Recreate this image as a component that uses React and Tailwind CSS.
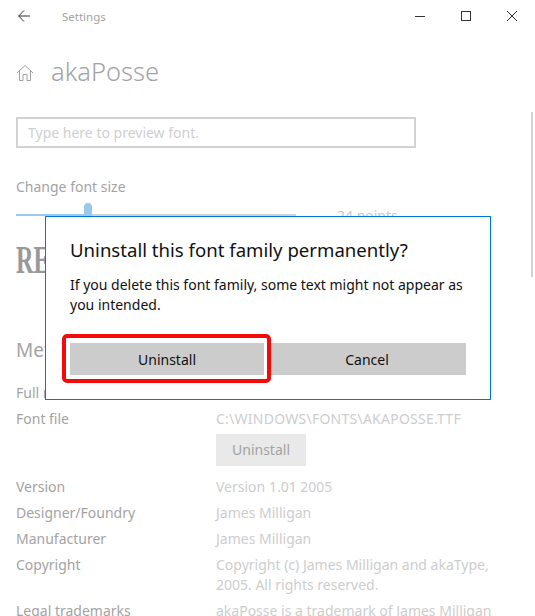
import React from 'react';

const rows = [
  { label: 'Version', value: 'Version 1.01 2005' },
  { label: 'Designer/Foundry', value: 'James Milligan' },
  { label: 'Manufacturer', value: 'James Milligan' },
  { label: 'Copyright', value: 'Copyright (c) James Milligan and akaType, 2005. All rights reserved.' },
  { label: 'Legal trademarks', value: 'akaPosse is a trademark of James Milligan' },
];

const TitleBar = () => (
  <div className="flex h-8 items-center text-[#333]">
    <svg className="ml-[18px] h-3 w-3" viewBox="0 0 12 12" fill="none" stroke="currentColor" strokeWidth="1">
      <path d="M0.5 6H12M6 0.5L0.7 6L6 11.5" />
    </svg>
    <span className="ml-[32px] mt-0.5 text-[11.5px] text-[#a3a3a3]">Settings</span>
    <div className="ml-auto flex">
      <div className="flex h-8 w-[46px] items-center justify-center">
        <div className="h-px w-2.5 bg-[#333]" />
      </div>
      <div className="flex h-8 w-[46px] items-center justify-center">
        <div className="h-2.5 w-2.5 border border-[#333]" />
      </div>
      <div className="flex h-8 w-[46px] items-center justify-center">
        <svg className="h-2.5 w-2.5" viewBox="0 0 10 10" fill="none" stroke="currentColor" strokeWidth="1">
          <path d="M0 0L10 10M10 0L0 10" />
        </svg>
      </div>
    </div>
  </div>
);

const App = () => {
  return (
    <div className="relative h-[616px] w-[535px] overflow-hidden bg-white font-['Noto_Sans',sans-serif] text-[14px]">
      <TitleBar />

      <div className="pl-4">
        <div className="mt-[21px] flex h-10 items-center">
          <svg className="h-[18px] w-[18px] text-[#a0a0a0]" viewBox="0 0 18 18" fill="none" stroke="currentColor" strokeWidth="1">
            <path d="M1 9L9 1.5L17 9M3.5 7V16.5H7V10.5H11V16.5H14.5V7" />
          </svg>
          <span className="ml-[17px] -mt-1 text-[25.5px] font-light text-[#a3a3a3]">akaPosse</span>
        </div>

        <div className="mt-[24px] flex h-[31px] w-[400px] items-center border-2 border-[#d2d2d2] pl-2.5 text-[14px] text-[#cfcfcf]">
          Type here to preview font.
        </div>

        <div className="mt-[28px] text-[#a3a3a3]">Change font size</div>

        <div className="mt-[9px] flex h-[18px] items-center">
          <div className="relative h-[2px] w-[280px] bg-[#d2d2d2]">
            <div className="h-full w-[72px] bg-[#99c9ef]" />
            <div className="absolute left-[68px] top-[-11px] h-[14px] w-2 rounded-t-full bg-[#99c9ef]" />
          </div>
          <span className="ml-[41px] text-[#c8c8c8]">24 points</span>
        </div>

        <div className="mt-[14px] h-11 font-['Liberation_Serif',serif] text-[39px] font-bold leading-[44px] text-[#999]">
          <span className="inline-block origin-left scale-x-[0.62]">RE</span>
        </div>

        <div className="mt-[54px] text-[19px] leading-7 text-[#a3a3a3]">Metadata</div>

        <div className="mt-[19px] grid grid-cols-[200px_280px] gap-y-1.5 leading-5">
          <div className="text-[#a3a3a3]">Full name</div>
          <div className="text-[#cdcdcd]">akaPosse</div>
          <div className="text-[#a3a3a3]">Font file</div>
          <div>
            <div className="tracking-[0.25px] text-[#cdcdcd]">C:\WINDOWS\FONTS\AKAPOSSE.TTF</div>
            <div className="mt-[5px] mb-[5px] flex h-8 w-[90px] items-center justify-center bg-[#e9e9e9] text-[#a3a3a3]">
              Uninstall
            </div>
          </div>
          {rows.map((row) => (
            <React.Fragment key={row.label}>
              <div className="text-[#a3a3a3]">{row.label}</div>
              <div className="text-[#cdcdcd]">{row.value}</div>
            </React.Fragment>
          ))}
        </div>
      </div>

      <div className="absolute right-0.5 top-[112px] h-[165px] w-0.5 bg-[#d2d2d2]" />

      {/* confirm dialog */}
      <div className="absolute left-[45px] top-[216px] h-[184px] w-[446px] border border-[#0078d7] bg-white px-6 text-[#111]">
        <div className="mt-[19px] text-[18.6px] leading-7">Uninstall this font family permanently?</div>
        <div className="mt-[11px] leading-5">If you delete this font family, some text might not appear as you intended.</div>
        <div className="mt-[28px] flex gap-1">
          <div className="flex h-8 w-[194px] items-center justify-center bg-[#cccccc]">Uninstall</div>
          <div className="flex h-8 w-[198px] items-center justify-center bg-[#cccccc]">Cancel</div>
        </div>
      </div>

      {/* red highlight */}
      <div className="absolute left-[62px] top-[334px] h-[49px] w-[209px] rounded-[5px] border-[4px] border-[#f30a0a]" />
    </div>
  );
};

export default App;
